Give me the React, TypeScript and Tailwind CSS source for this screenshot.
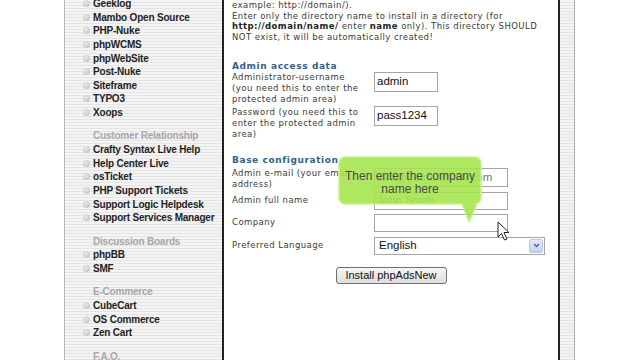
import React from 'react'

const stripes = 'bg-[repeating-linear-gradient(180deg,#f4f4f4_0px,#f4f4f4_2px,#e4e4e4_2px,#e4e4e4_3px)]'

type Section = { title?: string; items: string[] }

const sections: Section[] = [
    { items: ['Geeklog', 'Mambo Open Source', 'PHP-Nuke', 'phpWCMS', 'phpWebSite', 'Post-Nuke', 'Siteframe', 'TYPO3', 'Xoops'] },
    { title: 'Customer Relationship', items: ['Crafty Syntax Live Help', 'Help Center Live', 'osTicket', 'PHP Support Tickets', 'Support Logic Helpdesk', 'Support Services Manager'] },
    { title: 'Discussion Boards', items: ['phpBB', 'SMF'] },
    { title: 'E-Commerce', items: ['CubeCart', 'OS Commerce', 'Zen Cart'] },
    { title: 'F.A.Q.', items: ['FAQ Engine'] },
]

function Sidebar() {
    return (
        <div className={`w-[158px] shrink-0 border-l border-[#b8b8b8] ${stripes} font-['Liberation_Sans',Arial,sans-serif] text-[10px] font-bold tracking-[-0.2px]`}>
            <div className="-mt-[3px] pl-[18px]">
                {sections.map((s, i) => (
                    <div key={i} className={i > 0 ? 'mt-[10px]' : ''}>
                        {s.title && <div className="h-[13.6px] pl-[10px] leading-[13.6px] text-[#a8a8a8]">{s.title}</div>}
                        {s.items.map((it) => (
                            <div key={it} className="flex h-[13.6px] items-center gap-[3px] text-[#1e1e1e]">
                                <span className="h-[7px] w-[7px] rounded-full bg-[radial-gradient(circle_at_40%_35%,#e8e8e8,#bdbdbd)]"></span>
                                <span>{it}</span>
                            </div>
                        ))}
                    </div>
                ))}
            </div>
        </div>
    )
}

function Field({ value, w, h, className = '' }: { value: string; w: string; h: string; className?: string }) {
    return (
        <div className={`${w} ${h} flex items-center border border-[#a5a5a5] bg-white pl-[2px] font-['Liberation_Sans',Arial,sans-serif] text-[11.5px] tracking-normal text-[#111] ${className}`}>
            {value}
        </div>
    )
}

function Content() {
    return (
        <div className="relative w-[334px] shrink-0 overflow-hidden bg-white px-[8px] font-['DejaVu_Sans',Verdana,sans-serif] text-[8.5px] tracking-[0.45px] text-[#3a3a3a]">
            <div className="-mt-[11px] whitespace-nowrap leading-[10.75px]">
                <div>Enter the full path where you want to install phpAdsNew (for</div>
                <div>example: http://domain/).</div>
                <div>Enter only the directory name to install in a directory (for</div>
                <div>
                    <b className="text-[#222]">http://domain/name/</b> enter <b className="text-[#222]">name</b> only). This directory SHOULD
                </div>
                <div>NOT exist, it will be automatically created!</div>
            </div>

            <div className="mt-[18px] h-[11px] text-[9px] leading-[11px] font-bold tracking-[0.6px] text-[#2f5f8f]">Admin access data</div>

            <div className="flex items-start">
                <div className="w-[142px] leading-[11px]">
                    Administrator-username<br />(you need this to enter the<br />protected admin area)
                </div>
                <Field value="admin" w="w-[64px]" h="h-[20px]" />
            </div>

            <div className="mt-[1px] flex items-start">
                <div className="w-[142px] pt-[1px] leading-[11px]">
                    Password (you need this to<br />enter the protected admin<br />area)
                </div>
                <Field value="pass1234" w="w-[64px]" h="h-[20px]" />
            </div>

            <div className="mt-[15px] h-[11px] text-[9px] leading-[11px] font-bold tracking-[0.6px] text-[#2f5f8f]">Base configuration</div>

            <div className="mt-[2px] flex items-start">
                <div className="w-[142px] whitespace-nowrap leading-[11px]">
                    Admin e-mail (your email<br />address)
                </div>
                <Field value="info@yourdomain.com" w="w-[134px]" h="h-[19px]" className="text-[#777]" />
            </div>

            <div className="mt-[2px] flex items-center">
                <div className="w-[142px]">Admin full name</div>
                <Field value="John Smith" w="w-[134px]" h="h-[18px]" className="text-[#777]" />
            </div>

            <div className="mt-[4px] flex items-center">
                <div className="w-[142px]">Company</div>
                <Field value="" w="w-[134px]" h="h-[18px]" />
            </div>

            <div className="mt-[5px] flex items-center">
                <div className="w-[142px]">Preferred Language</div>
                <div className="flex h-[18px] w-[171px] items-center justify-between border border-[#a5a5a5] bg-white pl-[4px] pr-[1px] font-['Liberation_Sans',Arial,sans-serif] text-[11.5px] tracking-normal text-[#111]">
                    <span>English</span>
                    <span className="flex h-[14px] w-[14px] items-center justify-center rounded-[2px] border border-[#b8c9e6] bg-[linear-gradient(180deg,#e3ebf8,#c3d3ee)]">
                        <svg width="7" height="5" viewBox="0 0 7 5"><path d="M1 1l2.5 2.5L6 1" stroke="#4d6185" strokeWidth="1.4" fill="none" /></svg>
                    </span>
                </div>
            </div>

            <div className="mt-[12px] flex justify-center">
                <div className="flex h-[17px] w-[111px] items-center justify-center rounded-[3px] border border-[#707070] bg-[linear-gradient(180deg,#f6f6f6,#dedede)] font-['Liberation_Sans',Arial,sans-serif] text-[11px] tracking-normal text-[#111]">
                    Install phpAdsNew
                </div>
            </div>

            {/* help bubble over the form */}
            <div className="absolute left-[114px] top-[156px] h-[68px] w-[146px]">
                <svg width="146" height="68" viewBox="0 0 146 68" className="absolute left-0 top-0">
                    <path
                        d="M7 1H137a6 6 0 0 1 6 6V42a6 6 0 0 1-6 6H139L131 66L124 48H7a6 6 0 0 1-6-6V7a6 6 0 0 1 6-6Z"
                        fill="#a4e44a"
                        fillOpacity="0.88"
                        stroke="#c8f28e"
                        strokeWidth="1.5"
                        strokeLinejoin="round"
                    />
                </svg>
                <div className="absolute left-0 top-[14px] w-[144px] text-center font-['Liberation_Sans',Arial,sans-serif] text-[12px] leading-[13px] tracking-normal text-[#4a4a4a]">
                    Then enter the company<br />name here
                </div>
            </div>

            {/* mouse pointer */}
            <svg width="13" height="20" viewBox="0 0 13 20" className="absolute left-[273px] top-[221px]">
                <path d="M1 1V16L4.5 12.5L7.5 19L10 18L7 11.5H12Z" fill="#fff" stroke="#222" strokeWidth="1" strokeLinejoin="round" />
            </svg>
        </div>
    )
}

export default function App() {
    return (
        <div className="flex h-[360px] w-[640px] overflow-hidden bg-white">
            <div className="w-[64px] shrink-0"></div>
            <Sidebar />
            <div className="w-[2px] shrink-0 bg-[#222]"></div>
            <Content />
            <div className="w-[2px] shrink-0 bg-[#222]"></div>
            <div className={`w-[15px] shrink-0 border-r border-[#b0b0b0] ${stripes}`}></div>
            <div className="flex-1"></div>
        </div>
    )
}
